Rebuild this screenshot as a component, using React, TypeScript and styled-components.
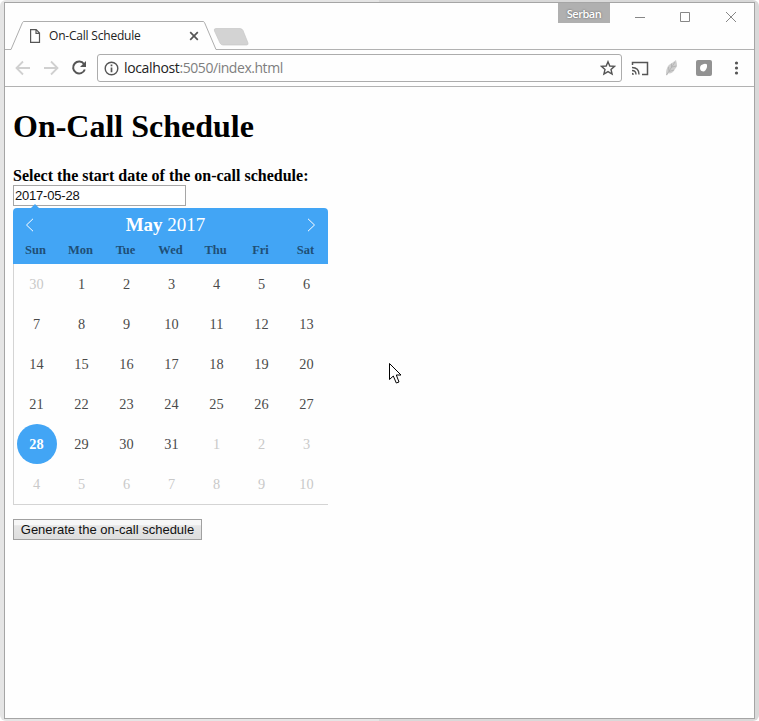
import React from "react";
import styled, { createGlobalStyle, css } from "styled-components";

const GlobalStyle = createGlobalStyle`
  * { box-sizing: border-box; }
  body { margin: 0; background: #fff; overflow: hidden; }
`;

const Desktop = styled.div`
  width: 759px;
  height: 721px;
  padding: 2px 4px;
  border-radius: 6px;
  background: linear-gradient(90deg, #e5e5e5 0 50%, #d9d9d9 50%);
  font-family: "Liberation Serif", "Times New Roman", serif;
`;

const BrowserWindow = styled.div`
  display: flex;
  flex-direction: column;
  width: 751px;
  height: 717px;
  border: 1px solid #a5a5a5;
  background: #fefefe;
`;

const TabStrip = styled.header`
  display: flex;
  position: relative;
  height: 47px;
  border-bottom: 1px solid #b2b2b2;
`;

const Tab = styled.div`
  position: relative;
  display: flex;
  align-items: center;
  width: 207px;
  height: 29px;
  margin: 18px 0 0 5px;
  padding: 0 18px 0 19px;
`;

const TabShape = styled.svg`
  position: absolute;
  left: 0;
  top: 0;
`;

const TabTitle = styled.span`
  position: relative;
  flex: 1;
  margin-left: 8px;
  color: #222;
  font: 12px/16px "Open Sans", sans-serif;
  letter-spacing: -0.2px;
  white-space: nowrap;
`;

const Icon = styled.svg`
  position: relative;
  display: block;
  flex: none;
`;

const NewTab = styled.svg`
  margin: 25px 0 0 -4px;
`;

const WindowControls = styled.div`
  display: flex;
  margin-left: auto;
  height: 28px;
`;

const Profile = styled.div`
  width: 52px;
  height: 20px;
  margin-right: 22px;
  background: #b0b0b0;
  color: #fff;
  text-align: center;
  text-shadow: 0 0 2px #555;
  font: 600 11px/21px "Open Sans", sans-serif;
  letter-spacing: -0.5px;
`;

const Toolbar = styled.nav`
  display: flex;
  align-items: center;
  height: 37px;
  border-bottom: 1px solid #b2b2b2;
`;

const NavIcons = styled.div`
  width: 92px;
`;

const AddressBar = styled.div`
  display: flex;
  align-items: center;
  width: 525px;
  height: 28px;
  padding: 0 5px 0 6px;
  border: 1px solid #acacac;
  border-radius: 3px;
`;

const Url = styled.span`
  flex: 1;
  margin-left: 5px;
  color: #7f7f7f;
  font: 14px/20px "Open Sans", sans-serif;
  letter-spacing: -0.45px;
`;

const Host = styled.span`
  color: #222;
  letter-spacing: -0.35px;
`;

const Page = styled.main`
  padding: 21px 8px 0;
`;

const Title = styled.h1`
  margin: 0 0 22px;
  color: #000;
  font-size: 32px;
  line-height: 37px;
`;

const FieldLabel = styled.label`
  display: block;
  font-size: 16px;
  font-weight: bold;
  line-height: 18px;
`;

const DateInput = styled.input`
  display: block;
  width: 173px;
  height: 21px;
  padding: 1px;
  border: 1px solid #a6a6a6;
  border-radius: 0;
  outline: 0;
  background: #fff;
  color: #111;
  font: 13px "Liberation Sans", Arial, sans-serif;
  letter-spacing: -0.2px;
`;

const Calendar = styled.section`
  position: relative;
  width: 315px;
  margin-top: 2px;
`;

const Pointer = styled.svg`
  position: absolute;
  left: 17px;
  top: -4px;
`;

const CalendarHeader = styled.div`
  height: 56px;
  border-radius: 4px 4px 0 0;
  background: #42a5f5;
`;

const MonthRow = styled.div`
  display: flex;
  align-items: center;
  height: 34px;
  padding: 0 12px;
`;

const Month = styled.div`
  flex: 1;
  padding-right: 10px;
  color: #fff;
  font-size: 19px;
  line-height: 22px;
  text-align: center;
`;

const Grid = styled.div`
  display: grid;
  grid-template-columns: repeat(7, 45px);
`;

const Weekday = styled.span`
  color: #1f4f76;
  font-size: 12.5px;
  font-weight: bold;
  line-height: 17px;
  text-align: center;
`;

const Days = styled(Grid)`
  height: 241px;
  grid-auto-rows: 40px;
  overflow: hidden;
  justify-items: center;
  border-left: 1px solid #d4d4d4;
  border-bottom: 1px solid #d4d4d4;
`;

const Day = styled.span<{ $muted: boolean; $selected: boolean }>`
  width: 40px;
  color: ${(p) => (p.$muted ? "#c9c9c9" : "#4a4a4a")};
  font-size: 14.3px;
  line-height: 40px;
  text-align: center;
  ${(p) =>
    p.$selected &&
    css`
      border-radius: 50%;
      background: #42a5f5;
      color: #fff;
      font-weight: bold;
    `}
`;

const GenerateButton = styled.button`
  display: block;
  width: 189px;
  height: 21px;
  margin-top: 14px;
  padding: 0;
  border: 1px solid #a0a0a0;
  border-radius: 0;
  background: linear-gradient(#f7f7f7 0 25%, #e6e6e6 30%, #dedede);
  color: #111;
  font: 13px/17px "Liberation Sans", Arial, sans-serif;
`;

const Cursor = styled.svg`
  position: absolute;
  left: 389px;
  top: 363px;
`;

const weekdays = ["Sun", "Mon", "Tue", "Wed", "Thu", "Fri", "Sat"];
const days = Array.from({ length: 42 }, (_, i) => {
  const offset = i - 1;
  return {
    label: i === 0 ? 30 : offset < 31 ? offset + 1 : offset - 30,
    muted: i === 0 || offset >= 31,
    selected: offset === 27,
  };
});

export default function App() {
  return (
    <Desktop>
      <GlobalStyle />
      <BrowserWindow>
        <TabStrip>
          <Tab>
            <TabShape width="207" height="29" fill="none">
              <path d="M0 29 L.5 28.5 H1 L13 .5 H194 L206 28.5 H207 V29Z" fill="#fefefe" />
              <path d="M0 28.5 H1 L12.5 1.5 Q13 .5 14 .5 H193 Q194 .5 194.5 1.5 L206 28.5 H207" stroke="#adadad" />
            </TabShape>
            <Icon width="12" height="14" viewBox="0 0 12 14" fill="none" stroke="#555" strokeWidth="1.2">
              <path d="M1.6.7H7.2L10.5 4V13.3H1.6ZM7 .7V4.3H10.5" />
            </Icon>
            <TabTitle>On-Call Schedule</TabTitle>
            <Icon width="10" height="10" stroke="#555" strokeWidth="1.7">
              <path d="M1.2 1.2 8.8 8.8M8.8 1.2 1.2 8.8" />
            </Icon>
          </Tab>
          <NewTab width="38" height="19">
            <path d="M3 .5H27Q29 .5 30 2.5L35 15Q35.5 17 33.5 17H10Q8 17 7 15L1.5 3Q.5 .5 3 .5Z" fill="#d3d3d3" stroke="#c7c7c7" strokeWidth=".7" />
          </NewTab>
          <WindowControls>
            <Profile>Serban</Profile>
            <Icon width="122" height="28" fill="none" stroke="#878787">
              <path d="M3 14.5H13M48.5 9.5H57.5V18.5H48.5ZM94 9 104 19M104 9 94 19" />
            </Icon>
          </WindowControls>
        </TabStrip>
        <Toolbar>
          <NavIcons>
            <Icon width="92" height="36" fill="none">
              <path d="M25 18H12M18 11.5 11.5 18 18 24.5M39 18H52M46 11.5 52.5 18 46 24.5" stroke="#d0d0d0" strokeWidth="1.8" />
              <path d="M79 14A6 6 0 1 0 79.8 19.5" stroke="#555" strokeWidth="2" />
              <path d="M81 11V17H75Z" fill="#555" />
            </Icon>
          </NavIcons>
          <AddressBar>
            <Icon width="15" height="15" viewBox="0 0 15 15" fill="none" stroke="#555">
              <circle cx="7.5" cy="7.5" r="6.3" strokeWidth="1.4" />
              <path d="M7.5 6.5V11.2M7.5 3.6V5.2" strokeWidth="1.7" />
            </Icon>
            <Url><Host>localhost</Host>:5050/index.html</Url>
            <Icon width="16" height="16" viewBox="0 0 16 16" fill="none" stroke="#555" strokeWidth="1.4">
              <path d="M8 1.7 9.8 6 14.5 6.4 11 9.4 12.1 14 8 11.6 3.9 14 5 9.4 1.5 6.4 6.2 6Z" />
            </Icon>
          </AddressBar>
          <Icon width="127" height="36" fill="none">
            <path d="M10.5 15V12.5H25.5V24.5H20" stroke="#555" strokeWidth="1.5" />
            <path d="M10 17.5Q17 17.5 17 24.5M10 20.5Q14 20.5 14 24.5" stroke="#555" strokeWidth="1.4" />
            <path d="M10 22.7V24.7H12Q12 22.7 10 22.7Z" fill="#555" />
            <path d="M44 25C44 20 45 15 50 13L54 10C55 14 56 16 53 19C52 22 49 24 46 23.5L45 25.5Z" fill="#cecece" />
            <path d="M44.5 25 53 12M47 21 46.5 17M49.5 17.5V13.5M47 21.5 52 20M50 17 54.5 16" stroke="#b0b0b0" strokeWidth=".8" />
            <rect x="74" y="10" width="16" height="16" rx="2" fill="#929292" />
            <path d="M79 15.2Q83 12.5 85 14.5Q85.5 19 82 21.5Q78 21.5 78 18Q78 16.5 79 15.2Z" fill="#fff" />
            <circle cx="114.5" cy="13" r="1.6" fill="#555" /><circle cx="114.5" cy="18" r="1.6" fill="#555" /><circle cx="114.5" cy="23" r="1.6" fill="#555" />
          </Icon>
        </Toolbar>
        <Page>
          <Title>On-Call Schedule</Title>
          <FieldLabel htmlFor="start">Select the start date of the on-call schedule:</FieldLabel>
          <DateInput id="start" defaultValue="2017-05-28" />
          <Calendar>
            <Pointer width="10" height="5"><path d="M0 5 5 0 10 5Z" fill="#42a5f5" /></Pointer>
            <CalendarHeader>
              <MonthRow>
                <Icon width="10" height="14" fill="none" stroke="#fff"><path d="M8 .8 1.5 7 8 13.2" /></Icon>
                <Month><b>May</b> 2017</Month>
                <Icon width="10" height="14" fill="none" stroke="#fff"><path d="M2 .8 8.5 7 2 13.2" /></Icon>
              </MonthRow>
              <Grid>{weekdays.map((d) => <Weekday key={d}>{d}</Weekday>)}</Grid>
            </CalendarHeader>
            <Days>
              {days.map((d, i) => (
                <Day key={i} $muted={d.muted} $selected={d.selected}>{d.label}</Day>
              ))}
            </Days>
          </Calendar>
          <GenerateButton>Generate the on-call schedule</GenerateButton>
        </Page>
      </BrowserWindow>
      <Cursor width="13" height="22" viewBox="0 0 13 22">
        <path d="M.5 .5V16.5L4.3 13 7.3 20 10 19 7.3 12H12Z" fill="#fff" stroke="#000" />
      </Cursor>
    </Desktop>
  );
}
